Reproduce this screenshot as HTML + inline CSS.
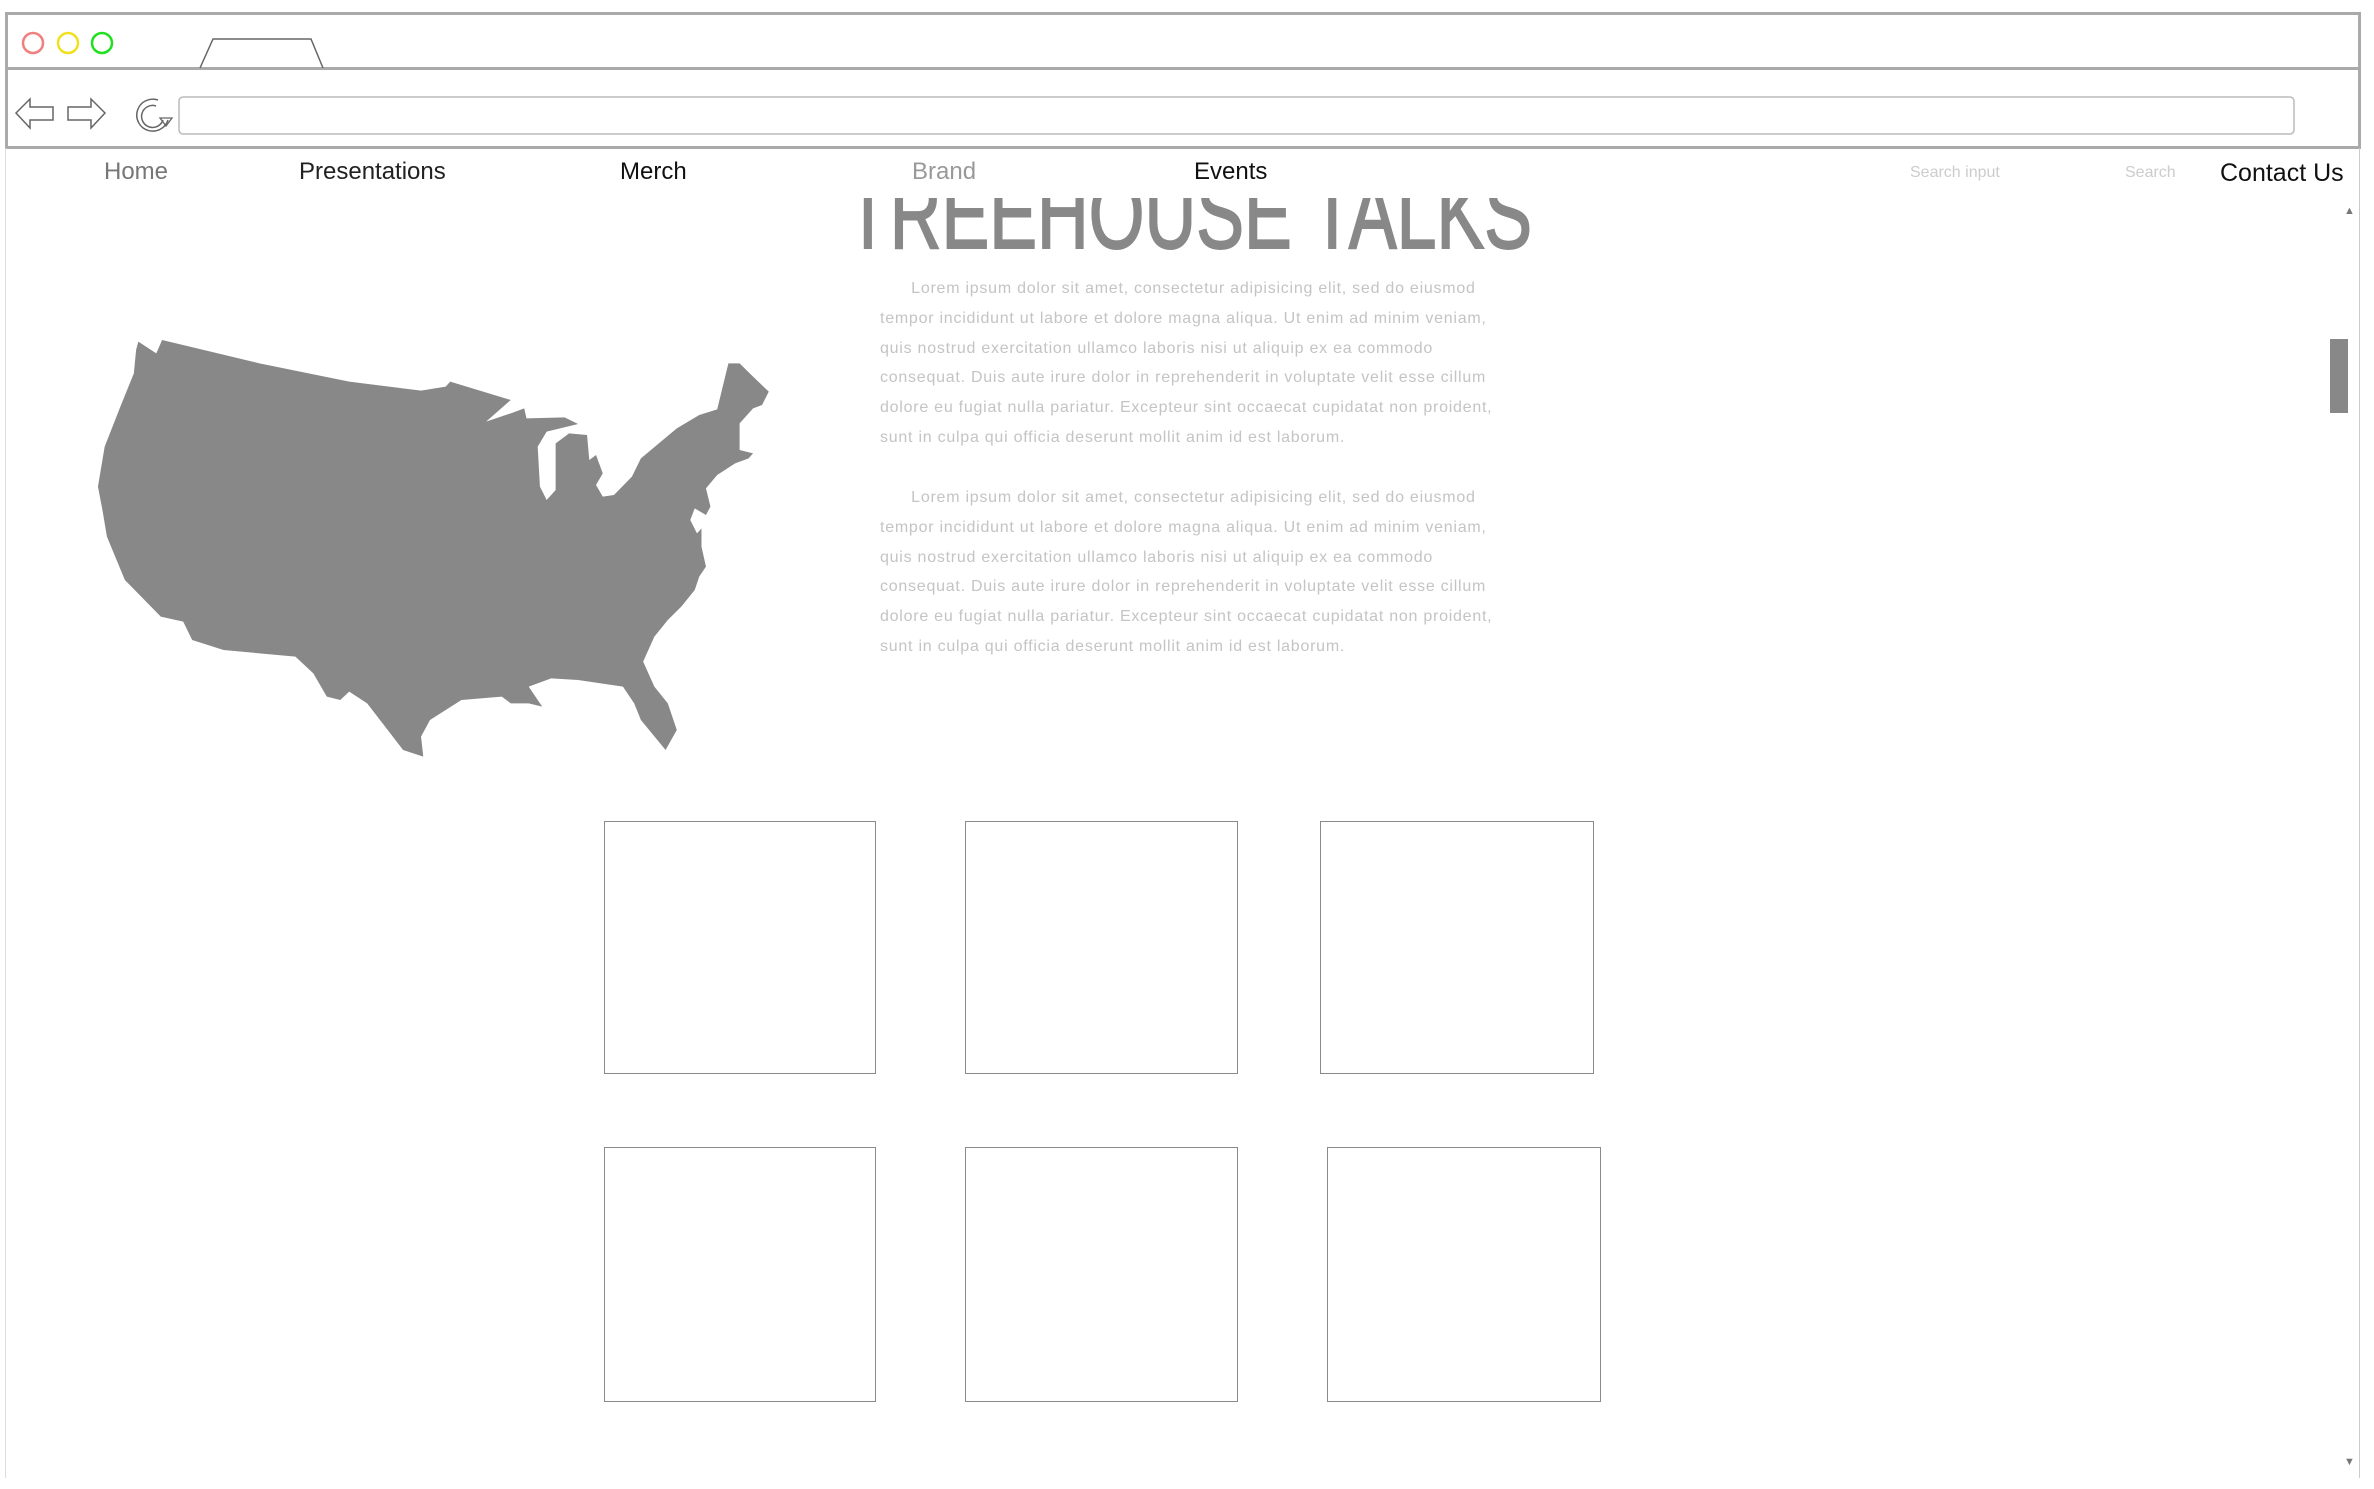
<!DOCTYPE html>
<html><head><meta charset="utf-8"><style>
html,body{margin:0;padding:0;background:#fff;width:2374px;height:1489px;overflow:hidden;position:relative;font-family:"Liberation Sans",sans-serif}
.a{position:absolute}
.nav{position:absolute;top:158px;font-size:24px;white-space:nowrap}
.p{position:absolute;left:880px;width:640px;font-size:16px;line-height:29.8px;color:#c4c4c4;letter-spacing:0.75px;white-space:nowrap}
.box{position:absolute;border:1.5px solid #8a8a8a;box-sizing:border-box}
</style></head><body>
<div class="a" style="left:5px;top:12px;width:2356px;height:136px;border:3px solid #aaa;border-bottom:none;box-sizing:border-box"></div>
<div class="a" style="left:5px;top:67px;width:2356px;height:3px;background:#aaa"></div>
<div class="a" style="left:5px;top:146px;width:2356px;height:3px;background:#aaa"></div>
<div class="a" style="left:5px;top:148px;width:1px;height:1330px;background:#ddd"></div>
<div class="a" style="left:2359px;top:148px;width:1px;height:1330px;background:#ccc"></div>
<svg class="a" style="left:0;top:0" width="2374" height="150">
<circle cx="33" cy="43" r="10" fill="none" stroke="#f08080" stroke-width="2.5"/>
<circle cx="68" cy="43" r="10" fill="none" stroke="#f0e020" stroke-width="2.5"/>
<circle cx="102" cy="43" r="10" fill="none" stroke="#20e020" stroke-width="2.5"/>
<path d="M200 68 L213 39 L311 39 L323 68" fill="none" stroke="#666" stroke-width="1.5"/>
<path d="M16 113 L30 99 L30 107 L53 107 L53 120 L30 120 L30 128 Z" fill="none" stroke="#666" stroke-width="1.5"/>
<path d="M105 113 L91 99 L91 107 L68 107 L68 120 L91 120 L91 128 Z" fill="none" stroke="#666" stroke-width="1.5"/>
<path d="M168 120 A16 16 0 1 1 158 100 M163 120 A11 11 0 1 1 156 106" fill="none" stroke="#666" stroke-width="1.5"/>
<path d="M160 118 L172 118 L166 126 Z" fill="none" stroke="#666" stroke-width="1.3"/>
<rect x="179" y="97" width="2115" height="37" rx="4" fill="none" stroke="#bbb" stroke-width="1.5"/>
</svg>
<div class="nav" style="left:104px;color:#777">Home</div>
<div class="nav" style="left:299px;color:#222">Presentations</div>
<div class="nav" style="left:620px;color:#111">Merch</div>
<div class="nav" style="left:912px;color:#999">Brand</div>
<div class="nav" style="left:1194px;color:#111">Events</div>
<div class="nav" style="left:1910px;font-size:16px;color:#ccc;top:164px">Search input</div>
<div class="nav" style="left:2125px;font-size:16px;color:#ccc;top:164px">Search</div>
<div class="nav" style="left:2220px;font-size:25px;color:#111;top:159px">Contact Us</div>
<svg class="a" style="left:0;top:198px" width="2374" height="60">
<text x="846" y="50" font-size="100" fill="#888" stroke="#888" stroke-width="2" textLength="686" lengthAdjust="spacingAndGlyphs" font-family="Liberation Sans Narrow, Liberation Sans, sans-serif">TREEHOUSE TALKS</text>
</svg>
<div class="a" style="left:2344px;top:205px;font-size:11px;color:#777">▲</div>
<div class="a" style="left:2344px;top:1456px;font-size:11px;color:#777">▼</div>
<div class="a" style="left:2330px;top:339px;width:18px;height:74px;background:#888"></div>
<svg class="a" style="left:80px;top:320px" width="700" height="460" viewBox="0 0 1560 1380" preserveAspectRatio="none">
<path fill="#888" d="M130 65 L170 100 L183 60 L400 130 L600 185 L760 212 L815 200 L825 185 L960 240 L905 305 L960 280 L990 265 L995 295 L1080 292 L1110 312 L1040 335 L1020 380 L1025 500 L1040 540 L1060 510 L1060 370 L1090 340 L1130 345 L1135 420 L1150 405 L1165 460 L1150 495 L1165 530 L1190 525 L1230 470 L1250 415 L1330 325 L1380 285 L1420 268 L1445 130 L1470 130 L1500 170 L1535 215 L1520 255 L1500 265 L1470 310 L1470 390 L1500 400 L1490 415 L1460 430 L1420 465 L1395 505 L1405 560 L1395 585 L1370 565 L1360 600 L1375 640 L1385 625 L1385 680 L1395 740 L1380 770 L1370 810 L1340 860 L1310 900 L1280 950 L1255 1025 L1280 1100 L1310 1150 L1330 1230 L1305 1290 L1250 1200 L1235 1150 L1210 1100 L1110 1080 L1050 1075 L1000 1100 L1030 1160 L1000 1150 L960 1150 L940 1130 L850 1140 L780 1200 L760 1250 L765 1310 L720 1290 L680 1220 L640 1150 L600 1115 L580 1140 L550 1130 L520 1060 L480 1010 L320 990 L250 960 L230 905 L180 890 L100 780 L60 650 L50 570 L40 500 L55 380 L90 260 L120 160 L125 90 Z"/>
</svg>
<div class="p" style="top:274px">&nbsp;&nbsp;&nbsp;&nbsp;&nbsp;&nbsp;Lorem ipsum dolor sit amet, consectetur adipisicing elit, sed do eiusmod<br>tempor incididunt ut labore et dolore magna aliqua. Ut enim ad minim veniam,<br>quis nostrud exercitation ullamco laboris nisi ut aliquip ex ea commodo<br>consequat. Duis aute irure dolor in reprehenderit in voluptate velit esse cillum<br>dolore eu fugiat nulla pariatur. Excepteur sint occaecat cupidatat non proident,<br>sunt in culpa qui officia deserunt mollit anim id est laborum.</div>
<div class="p" style="top:483px">&nbsp;&nbsp;&nbsp;&nbsp;&nbsp;&nbsp;Lorem ipsum dolor sit amet, consectetur adipisicing elit, sed do eiusmod<br>tempor incididunt ut labore et dolore magna aliqua. Ut enim ad minim veniam,<br>quis nostrud exercitation ullamco laboris nisi ut aliquip ex ea commodo<br>consequat. Duis aute irure dolor in reprehenderit in voluptate velit esse cillum<br>dolore eu fugiat nulla pariatur. Excepteur sint occaecat cupidatat non proident,<br>sunt in culpa qui officia deserunt mollit anim id est laborum.</div>
<div class="box" style="left:604px;top:821px;width:272px;height:253px"></div>
<div class="box" style="left:965px;top:821px;width:273px;height:253px"></div>
<div class="box" style="left:1320px;top:821px;width:274px;height:253px"></div>
<div class="box" style="left:604px;top:1147px;width:272px;height:255px"></div>
<div class="box" style="left:965px;top:1147px;width:273px;height:255px"></div>
<div class="box" style="left:1327px;top:1147px;width:274px;height:255px"></div>
</body></html>
